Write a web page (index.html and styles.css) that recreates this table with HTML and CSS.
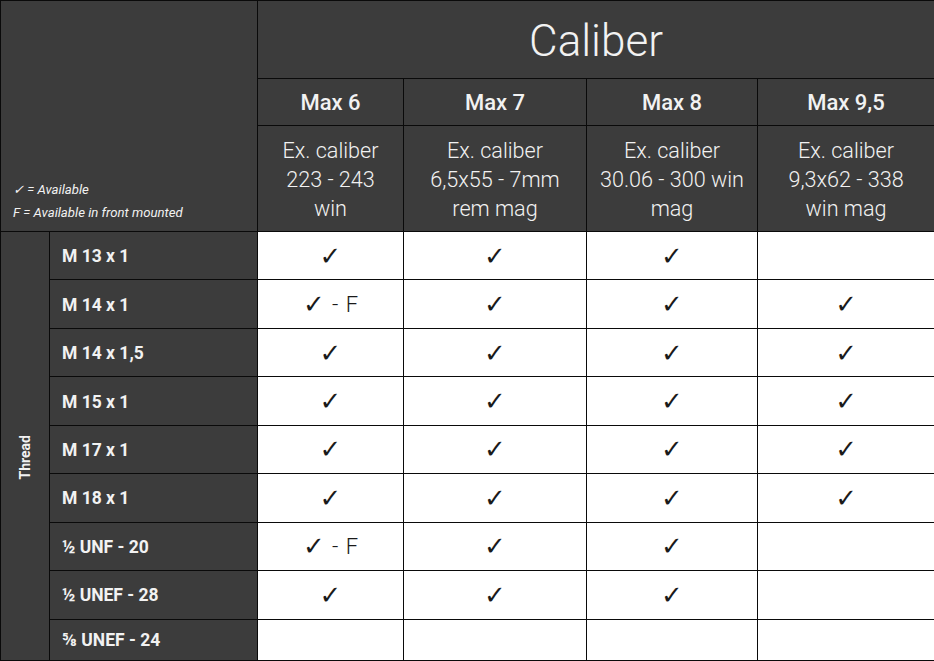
FILE: index.html
```html
<!DOCTYPE html>
<html>
<head>
<meta charset="utf-8">
<link rel="stylesheet" href="styles.css">
</head>
<body>
<table class="grid">
  <colgroup>
    <col class="c-thread">
    <col class="c-label">
    <col class="c-m6">
    <col class="c-m7">
    <col class="c-m8">
    <col class="c-m95">
  </colgroup>
  <thead>
    <tr class="r-title">
      <th class="legend" colspan="2" rowspan="3">
        <div class="legend-line">✓ = Available</div>
        <div class="legend-line">F = Available in front mounted</div>
      </th>
      <th class="title" colspan="4">Caliber</th>
    </tr>
    <tr class="r-max">
      <th class="max">Max 6</th>
      <th class="max">Max 7</th>
      <th class="max">Max 8</th>
      <th class="max">Max 9,5</th>
    </tr>
    <tr class="r-ex">
      <th class="ex">Ex. caliber<br>223 - 243<br>win</th>
      <th class="ex">Ex. caliber<br>6,5x55 - 7mm<br>rem mag</th>
      <th class="ex">Ex. caliber<br>30.06 - 300 win<br>mag</th>
      <th class="ex">Ex. caliber<br>9,3x62 - 338<br>win mag</th>
    </tr>
  </thead>
  <tbody>
    <tr>
      <th class="thread" rowspan="9"><span class="thread-text">Thread</span></th>
      <th class="label">M 13 x 1</th>
      <td>✓</td><td>✓</td><td>✓</td><td></td>
    </tr>
    <tr>
      <th class="label">M 14 x 1</th>
      <td>✓<span class="f"> - F</span></td><td>✓</td><td>✓</td><td>✓</td>
    </tr>
    <tr>
      <th class="label">M 14 x 1,5</th>
      <td>✓</td><td>✓</td><td>✓</td><td>✓</td>
    </tr>
    <tr>
      <th class="label">M 15 x 1</th>
      <td>✓</td><td>✓</td><td>✓</td><td>✓</td>
    </tr>
    <tr>
      <th class="label">M 17 x 1</th>
      <td>✓</td><td>✓</td><td>✓</td><td>✓</td>
    </tr>
    <tr>
      <th class="label">M 18 x 1</th>
      <td>✓</td><td>✓</td><td>✓</td><td>✓</td>
    </tr>
    <tr>
      <th class="label">½ UNF - 20</th>
      <td>✓<span class="f"> - F</span></td><td>✓</td><td>✓</td><td></td>
    </tr>
    <tr>
      <th class="label">½ UNEF - 28</th>
      <td>✓</td><td>✓</td><td>✓</td><td></td>
    </tr>
    <tr class="r-last">
      <th class="label">⅝ UNEF - 24</th>
      <td></td><td></td><td></td><td></td>
    </tr>
  </tbody>
</table>
</body>
</html>
```
FILE: styles.css
```css
html, body {
  margin: 0;
  padding: 0;
  background: #ffffff;
}

.grid {
  border-collapse: collapse;
  table-layout: fixed;
  width: 934px;
  font-family: Roboto, "Liberation Sans", sans-serif;
}

.c-thread { width: 49px; }
.c-label { width: 208px; }
.c-m6 { width: 146px; }
.c-m7 { width: 183px; }
.c-m8 { width: 171px; }
.c-m95 { width: 177px; }

.grid th,
.grid td {
  border: 1px solid #0a0a0a;
  padding: 0;
}

.grid th {
  background: #3c3c3c;
  color: #f2f2f2;
}

.r-title { height: 78px; }
.r-max { height: 47px; }
.r-ex { height: 106px; }

.legend {
  vertical-align: bottom;
  text-align: left;
  padding: 0 0 7px 12px !important;
  font-style: italic;
  font-weight: 400;
  font-size: 13.2px;
  line-height: 23px;
  color: #e8e8e8;
}

.title {
  font-weight: 300;
  font-size: 44px;
  text-align: center;
  vertical-align: middle;
  padding-top: 2px !important;
}

.max {
  font-weight: 500;
  font-size: 22px;
  text-align: center;
  vertical-align: middle;
  padding-top: 1px !important;
}

.ex {
  font-weight: 300;
  font-size: 21.6px;
  line-height: 29px;
  text-align: center;
  vertical-align: middle;
  padding-top: 2px !important;
}

.grid tbody tr { height: 48.45px; }
.grid tbody tr.r-last { height: 41px; }

.label {
  text-align: left;
  padding-left: 12px !important;
  padding-top: 1px !important;
  font-weight: 700;
  font-size: 17.5px;
  vertical-align: middle;
}

.thread {
  vertical-align: middle;
  text-align: center;
  padding-top: 26px !important;
}

.thread-text {
  display: inline-block;
  writing-mode: vertical-rl;
  transform: rotate(180deg);
  font-weight: 700;
  font-size: 14px;
  color: #f2f2f2;
}

.grid td {
  background: #ffffff;
  color: #1a1a1a;
  text-align: center;
  vertical-align: middle;
  font-family: "DejaVu Sans", sans-serif;
  font-size: 26px;
}

.f {
  font-family: Roboto, "Liberation Sans", sans-serif;
  font-weight: 300;
  font-size: 22px;
  vertical-align: 1px;
  word-spacing: 2px;
}
```
